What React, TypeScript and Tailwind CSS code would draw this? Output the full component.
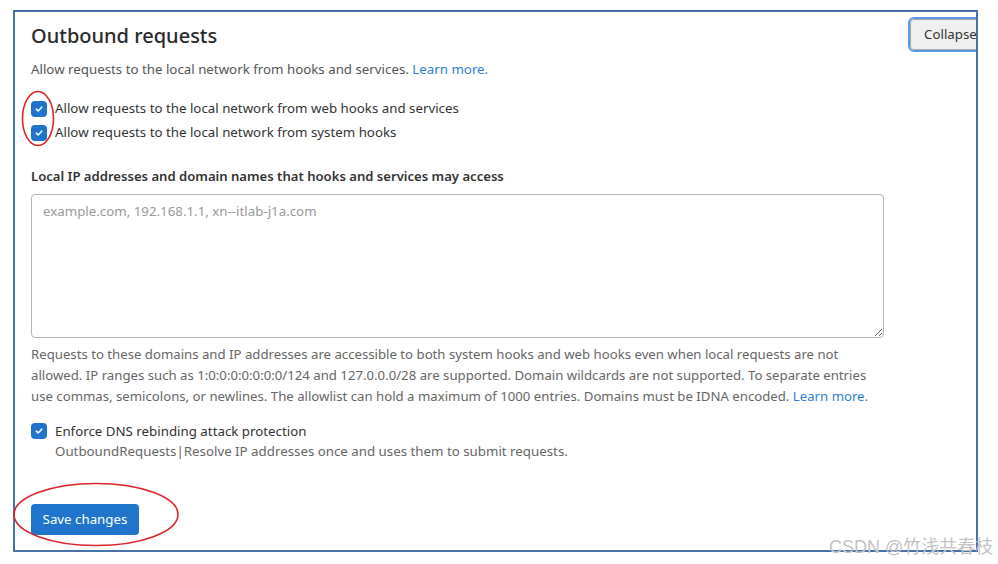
import React from "react";

function Check() {
  return (
    <span className="flex h-4 w-4 shrink-0 items-center justify-center rounded-[4px] bg-[#1f75cb]">
      <svg width="10" height="10" viewBox="0 0 10 10" fill="none">
        <path d="M2.3 5.2 L4.2 7 L7.7 3.2" stroke="white" strokeWidth="1.6" strokeLinecap="round" strokeLinejoin="round" />
      </svg>
    </span>
  );
}

export default function App() {
  const font = { fontFamily: '"Noto Sans", "Open Sans", Arial, sans-serif' };
  return (
    <div className="relative h-[564px] w-[998px] overflow-hidden bg-white pl-[13px] pt-[10px]" style={font}>
      <div className="h-[542px] w-[965px] overflow-hidden border-2 border-[#4573a9] bg-white px-4">
        {/* header */}
        <div className="flex items-start justify-between">
          <h1 className="mt-[10px] whitespace-nowrap text-[20px] font-medium leading-[28px] text-[#2a2a2a]">Outbound requests</h1>
          <div className="mr-[-42px] mt-[5px] w-[94px] shrink-0 rounded-[6px] border-2 border-[#5b9be3]">
            <button className="flex h-[31px] w-full items-center rounded-[4px] border border-[#a8a8a8] bg-[#efefef] pl-[13px] text-[13.3px] text-[#333]">
              Collapse
            </button>
          </div>
        </div>

        <p className="mt-[7px] whitespace-nowrap text-[13.3px] leading-[20px] text-[#555]">
          Allow requests to the local network from hooks and services.{" "}
          <span className="text-[#2f7fd1]">Learn more.</span>
        </p>

        <div className="mt-[18px] flex flex-col">
          <div className="flex h-6 items-center gap-2 whitespace-nowrap text-[13.3px] text-[#333]">
            <Check />
            <span>Allow requests to the local network from web hooks and services</span>
          </div>
          <div className="flex h-6 items-center gap-2 whitespace-nowrap text-[13.3px] text-[#333]">
            <Check />
            <span>Allow requests to the local network from system hooks</span>
          </div>
        </div>

        <div className="mt-[21px] whitespace-nowrap text-[13.1px] font-semibold leading-[20px] text-[#333]">
          Local IP addresses and domain names that hooks and services may access
        </div>

        <textarea
          readOnly
          placeholder="example.com, 192.168.1.1, xn--itlab-j1a.com"
          className="mt-2 block h-[144px] w-[853px] rounded-[4px] border border-[#b5b5b5] px-[11px] py-[6px] text-[13.3px] leading-[20px] text-[#333] outline-none placeholder:text-[#9a9a9a]"
          style={{ ...font, fontVariantLigatures: "none" }}
        />

        <div className="mt-[6px] whitespace-nowrap text-[13.2px] leading-[21px] text-[#666]">
          <div>Requests to these domains and IP addresses are accessible to both system hooks and web hooks even when local requests are not</div>
          <div>allowed. IP ranges such as 1:0:0:0:0:0:0:0/124 and 127.0.0.0/28 are supported. Domain wildcards are not supported. To separate entries</div>
          <div>
            use commas, semicolons, or newlines. The allowlist can hold a maximum of 1000 entries. Domains must be IDNA encoded.{" "}
            <span className="text-[#2f7fd1]">Learn more.</span>
          </div>
        </div>

        <div className="mt-[14px] flex items-center gap-2 whitespace-nowrap text-[13.3px] leading-[20px] text-[#333]">
          <Check />
          <span>Enforce DNS rebinding attack protection</span>
        </div>
        <div className="whitespace-nowrap pl-6 text-[13.3px] leading-[20px] text-[#666]">
          OutboundRequests|Resolve IP addresses once and uses them to submit requests.
        </div>

        <button className="mt-[43px] flex h-[31px] w-[108px] items-center justify-center rounded-[4px] bg-[#1f75cb] text-[13.3px] text-white">
          Save changes
        </button>
      </div>

      {/* red annotation ellipses */}
      <svg className="pointer-events-none absolute left-0 top-0" width="998" height="564">
        <ellipse cx="38" cy="118.5" rx="15.5" ry="27" fill="none" stroke="#d9262a" strokeWidth="1.6" />
        <ellipse cx="96" cy="514.5" rx="82" ry="31" fill="none" stroke="#d9262a" strokeWidth="1.6" />
      </svg>

      {/* watermark */}
      <div
        className="pointer-events-none absolute left-[829px] top-[536px] whitespace-nowrap text-[18px] leading-[22px] text-[#c4c4c4]"
        style={{ fontFamily: '"Liberation Sans", "Noto Sans CJK SC", sans-serif' }}
      >
        CSDN @竹浅共春枝
      </div>
    </div>
  );
}
